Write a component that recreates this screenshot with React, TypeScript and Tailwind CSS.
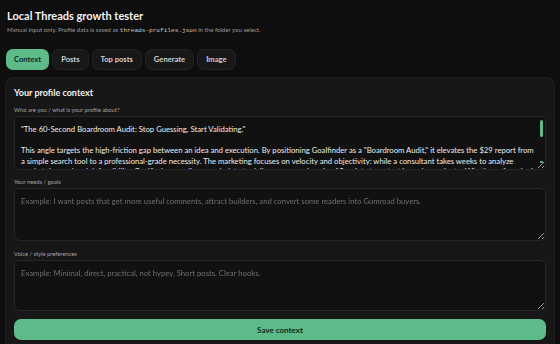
import React from "react";

const tabs = ["Context", "Posts", "Top posts", "Generate", "Image"];

const about = `"The 60-Second Boardroom Audit: Stop Guessing, Start Validating."

This angle targets the high-friction gap between an idea and execution. By positioning Goalfinder as a "Boardroom Audit," it elevates the $29 report from a simple search tool to a professional-grade necessity. The marketing focuses on velocity and objectivity: while a consultant takes weeks to analyze market demand and defensibility, Goalfinder uses live search data to deliver a comprehensive 15-point stress test in under a minute. Whether a founder is validating a side project or pitching investors, the audit gives them a clear verdict before they spend a dollar.`;

const Field = ({
  label,
  placeholder,
  value,
  h,
  className = "",
  scroll = false,
}: {
  label: string;
  placeholder?: string;
  value?: string;
  h: string;
  className?: string;
  scroll?: boolean;
}) => (
  <div className={className}>
    <div className="text-[5.8px] leading-[9px] text-[#a3a3a3]">{label}</div>
    <div className="relative mt-[2px]">
      <textarea
        defaultValue={value}
        placeholder={placeholder}
        className={`${h} block w-full resize-y rounded-[6px] border border-[#262626] bg-[#111111] pt-[7px] pb-[2px] pl-[6px] ${scroll ? "pr-[8px]" : "pr-[6px]"} text-[7.7px] leading-[10.6px] text-[#ececec] placeholder:text-[#6e6e6e] outline-none`}
      />
      {scroll && (
        <>
          {/* fake scrollbar, headless hides the native one */}
          <div className="pointer-events-none absolute right-[3px] top-[4px] h-[17px] w-[3px] rounded-full bg-[#5dbb8a]" />
          <div className="pointer-events-none absolute right-[3px] bottom-[7px] h-[2px] w-[3px] rounded-full bg-[#5dbb8a]" />
        </>
      )}
    </div>
  </div>
);

export default function App() {
  return (
    <div
      className="h-[344px] w-[560px] overflow-hidden bg-[#0e0e0e] px-[5px] pt-[7px] text-[#f2f2f2]"
      style={{ fontFamily: 'Lato, "Open Sans", sans-serif' }}
    >
      <div className="px-[2px]">
        <h1 className="text-[11px] font-bold leading-[18px]">Local Threads growth tester</h1>
        <p className="text-[6.1px] leading-[9px] text-[#9a9a9a]">
          Manual input only. Profile data is saved as{" "}
          <code className="font-['Liberation_Mono',monospace] text-[6.1px] text-[#c9c9c9]">threads-profiles.json</code>{" "}
          in the folder you select.
        </p>
      </div>

      <div className="mt-[14px] flex gap-[3px] pl-[1px]">
        {tabs.map((t, i) => (
          <button
            key={t}
            className={
              i === 0
                ? "h-[21px] rounded-[7px] bg-[#5dbb8a] px-[8px] text-[7.6px] font-bold text-[#0f2a1c]"
                : "h-[21px] rounded-[7px] border border-[#232323] bg-[#181818] px-[8px] text-[7.6px] font-bold text-[#cfcfcf]"
            }
          >
            {t}
          </button>
        ))}
      </div>

      <div className="mt-[7px] rounded-[8px] border border-[#1f1f1f] bg-[#171717] px-[8px] pt-[8px] pb-[10px]">
        <h2 className="text-[9px] font-bold leading-[14px]">Your profile context</h2>
        <Field className="mt-[5px]" label="Who are you / what is your profile about?" value={about} h="h-[54px]" scroll />
        <Field
          className="mt-[7px]"
          label="Your needs / goals"
          placeholder="Example: I want posts that get more useful comments, attract builders, and convert some readers into Gumroad buyers."
          h="h-[53px]"
        />
        <Field
          className="mt-[8px]"
          label="Voice / style preferences"
          placeholder="Example: Minimal, direct, practical, not hypey. Short posts. Clear hooks."
          h="h-[51px]"
        />
        <button className="mt-[8px] h-[21px] w-full rounded-[7px] bg-[#5dbb8a] text-[8px] font-bold text-[#0f2a1c]">
          Save context
        </button>
      </div>
    </div>
  );
}
